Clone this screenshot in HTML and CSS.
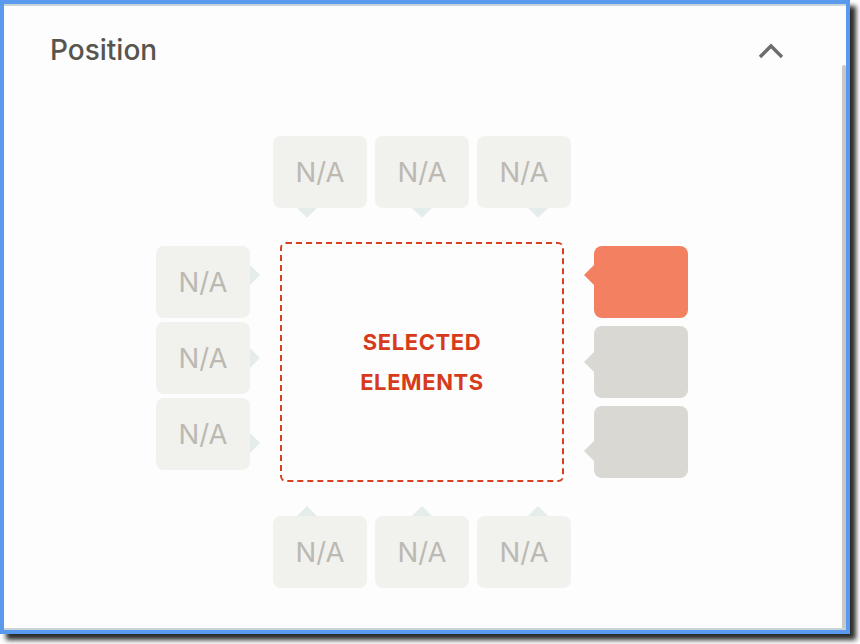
FILE: index.html
```html
<!DOCTYPE html>
<html lang="en">
<head>
  <meta charset="UTF-8">
  <meta name="viewport" content="width=device-width, initial-scale=1.0">
  <title>Position</title>
  <link rel="stylesheet" href="styles.css">
</head>
<body>
  <div class="frame">
    <div class="panel">
      <div class="panel-head">
        <span class="panel-title">Position</span>
        <button class="collapse" aria-label="Collapse">
          <svg width="26" height="16" viewBox="0 0 26 16"><polyline points="2,14 13,3 24,14" fill="none" stroke="#6d6d6d" stroke-width="3.4"/></svg>
        </button>
      </div>

      <div class="stage">
        <!-- above the selection -->
        <div class="row">
          <div class="slot tip-down at-start">N/A</div>
          <div class="slot tip-down">N/A</div>
          <div class="slot tip-down at-end">N/A</div>
        </div>

        <div class="middle">
          <div class="col col-left">
            <div class="slot tip-right at-start-v">N/A</div>
            <div class="slot tip-right">N/A</div>
            <div class="slot tip-right at-end-v">N/A</div>
          </div>

          <div class="selection">SELECTED<br>ELEMENTS</div>

          <div class="col col-right">
            <div class="slot tip-left at-start-v active"></div>
            <div class="slot tip-left taken"></div>
            <div class="slot tip-left at-end-v taken"></div>
          </div>
        </div>

        <!-- below the selection -->
        <div class="row">
          <div class="slot tip-up at-start">N/A</div>
          <div class="slot tip-up">N/A</div>
          <div class="slot tip-up at-end">N/A</div>
        </div>
      </div>

      <div class="scrollbar"></div>
    </div>
  </div>
</body>
</html>
```

FILE: styles.css
```css
body {
  margin: 0;
  padding-bottom: 10px;
  background: #fff;
  font-family: Inter, Roboto, "Liberation Sans", sans-serif;
}
.frame {
  width: 842px;
  height: 626px;
  border: 4px solid #5a9aee;
  box-shadow: 6px 6px 5px rgba(20,20,20,0.9);
}
.panel {
  position: relative;
  height: 622px;
  background: #fdfdfd;
  border-top: 2px solid #c9d4d8;
  border-bottom: 2px solid #c9d4d8;
}
.scrollbar {
  position: absolute;
  right: 0;
  top: 59px;
  bottom: 0;
  width: 4px;
  background: #c8c8c8;
  border-radius: 2px 2px 0 0;
}
.panel-head {
  display: flex;
  justify-content: space-between;
  align-items: center;
  padding: 28px 62px 0 46px;
}
.panel-title {
  font-size: 28px;
  line-height: 33px;
  font-weight: 500;
  color: #57554e;
}
.collapse {
  border: none;
  background: none;
  padding: 0;
  display: flex;
}
.stage {
  display: flex;
  flex-direction: column;
  align-items: center;
  gap: 34px;
  margin-top: 69px;
  padding-right: 6px;
}
.row {
  display: flex;
  gap: 8px;
}
.middle {
  display: flex;
  align-items: flex-start;
  gap: 30px;
}
.col {
  display: flex;
  flex-direction: column;
  margin-top: 4px;
}
.col-left { gap: 4px; }
.col-right { gap: 8px; }

.slot {
  --tip: 50%;
  --tip-color: #e5edec;
  position: relative;
  width: 94px;
  height: 72px;
  border-radius: 8px;
  background: #f1f1ee;
  color: #bcb9b2;
  font-size: 27.5px;
  display: flex;
  align-items: center;
  justify-content: center;
}
.slot.active {
  background: #f38161;
  --tip-color: #f38161;
}
.slot.taken {
  background: #d9d8d3;
  --tip-color: #d9d8d3;
}
.at-start { --tip: 36%; }
.at-end { --tip: 65%; }
.at-start-v { --tip: 40%; }
.at-end-v { --tip: 62%; }

/* little pointer toward the selection */
.slot::after {
  content: "";
  position: absolute;
  border: 10px solid transparent;
}
.tip-down::after {
  top: 100%;
  left: var(--tip);
  margin-left: -10px;
  border-bottom: 0;
  border-top-color: var(--tip-color);
}
.tip-up::after {
  bottom: 100%;
  left: var(--tip);
  margin-left: -10px;
  border-top: 0;
  border-bottom-color: var(--tip-color);
}
.tip-right::after {
  left: 100%;
  top: var(--tip);
  margin-top: -10px;
  border-right: 0;
  border-left-color: var(--tip-color);
}
.tip-left::after {
  right: 100%;
  top: var(--tip);
  margin-top: -10px;
  border-left: 0;
  border-right-color: var(--tip-color);
}

.selection {
  box-sizing: border-box;
  width: 284px;
  height: 240px;
  border: 2px dashed #d8401f;
  border-radius: 6px;
  display: flex;
  align-items: center;
  justify-content: center;
  text-align: center;
  color: #d63b1c;
  font-weight: 700;
  font-size: 22px;
  line-height: 40px;
  letter-spacing: 0.6px;
}
```
